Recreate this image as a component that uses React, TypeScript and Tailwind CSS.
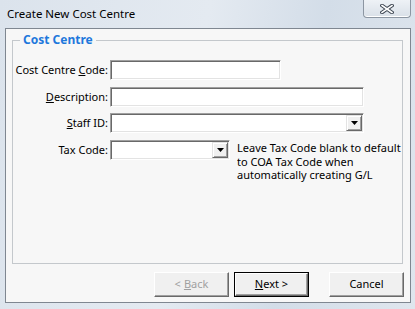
import React from "react";

const font = { fontFamily: '"Noto Sans", "Segoe UI", sans-serif' };

// sunken white field like a classic win32 edit box
const fieldCls =
  "h-[20px] bg-white border border-t-[#a0a0a0] border-l-[#a0a0a0] border-b-[#ffffff] border-r-[#ffffff] shadow-[inset_1px_1px_0_#696969,inset_-1px_-1px_0_#e3e3e3]";

const Mnemonic = ({ text, at }: { text: string; at: number }) => (
  <>
    {text.slice(0, at)}
    <span className="underline underline-offset-[1px]">{text[at]}</span>
    {text.slice(at + 1)}
  </>
);

const DropArrow = () => (
  <div className="ml-auto mr-[1px] h-[16px] w-[16px] flex items-center justify-center bg-[#f0f0f0] border border-t-[#e3e3e3] border-l-[#e3e3e3] border-b-[#696969] border-r-[#696969] shadow-[inset_1px_1px_0_#ffffff,inset_-1px_-1px_0_#a0a0a0]">
    <svg width="7" height="4" viewBox="0 0 7 4">
      <path d="M0 0h7L3.5 4z" fill="#000" />
    </svg>
  </div>
);

const Row = ({ label, children, className = "" }: { label: React.ReactNode; children: React.ReactNode; className?: string }) => (
  <div className={"flex items-start " + className}>
    <div className="w-[97px] pr-[2px] text-right leading-[20px]">{label}</div>
    {children}
  </div>
);

const WinButton = ({ children, disabled, isDefault }: { children: React.ReactNode; disabled?: boolean; isDefault?: boolean }) => (
  <button
    className={
      "h-[25px] w-[75px] flex items-center justify-center text-[11px] bg-[#f0f0f0] " +
      (isDefault ? "border border-[#000] " : "") +
      (disabled ? "text-[#a0a0a0]" : "text-black")
    }
    style={font}
  >
    <span className="w-full h-full flex items-center justify-center border border-t-[#ffffff] border-l-[#ffffff] border-b-[#696969] border-r-[#696969] shadow-[inset_-1px_-1px_0_#a0a0a0,inset_1px_1px_0_#f0f0f0]">
      {children}
    </span>
  </button>
);

export default function App() {
  return (
    <div
      className="w-[415px] h-[309px] overflow-hidden bg-[linear-gradient(100deg,#dbe3ec_0%,#e4eaf1_45%,#d3dde8_70%,#dfe6ee_100%)] text-black"
      style={font}
    >
      {/* title bar */}
      <div className="h-[28px] flex items-start">
        <div className="pl-[7px] pt-[6px] text-[11.5px] leading-[16px]">Create New Cost Centre</div>
        <div className="ml-auto mr-[4px] h-[18px] w-[48px] rounded-b-[4px] border border-t-0 border-[#8c96a2] bg-[linear-gradient(#eef2f6,#d9e0e8)] flex items-center justify-center shadow-[inset_0_-1px_0_#ffffff]">
          <svg width="14" height="10" viewBox="0 0 14 10">
            <path d="M2 1.5L12 8.5M12 1.5L2 8.5" stroke="#3d4652" strokeWidth="3.6" strokeLinecap="square" />
            <path d="M2 1.5L12 8.5M12 1.5L2 8.5" stroke="#ffffff" strokeWidth="1.6" strokeLinecap="square" />
          </svg>
        </div>
      </div>

      {/* client area */}
      <div className="ml-[5px] w-[406px] h-[275px] border border-[#7f8791] bg-[#f7f7f7] flex flex-col">
        <fieldset className="ml-[6px] mt-[4px] w-[391px] h-[231px] border border-[#c4c8cc] px-0 pb-0">
          <legend className="ml-[7px] px-[3px] text-[12px] font-bold leading-[14px] text-[#1e78dc]">Cost Centre</legend>
          <div className="text-[11px] flex flex-col">
            <Row label={<>Cost Centre <Mnemonic text="Code:" at={0} /></>} className="mt-[13px]">
              <div className={fieldCls + " w-[171px]"} />
            </Row>
            <Row label={<Mnemonic text="Description:" at={0} />} className="mt-[7px]">
              <div className={fieldCls + " w-[254px] h-[19px]"} />
            </Row>
            <Row label={<Mnemonic text="Staff ID:" at={0} />} className="mt-[6px]">
              <div className={fieldCls + " w-[254px] flex items-center"}>
                <DropArrow />
              </div>
            </Row>
            <Row label="Tax Code:" className="mt-[7px]">
              <div className={fieldCls + " w-[120px] h-[19px] flex items-center"}>
                <DropArrow />
              </div>
              <p className="ml-[7px] mt-[1px] w-[165px] h-[43px] overflow-hidden leading-[13.5px]">
                Leave Tax Code blank to default to COA Tax Code when automatically creating G/L codes.
              </p>
            </Row>
          </div>
        </fieldset>

        <div className="mt-[8px] mr-[6px] flex justify-end">
          <WinButton disabled>
            &lt; <span className="ml-[3px]"><Mnemonic text="Back" at={0} /></span>
          </WinButton>
          <div className="ml-[5px]">
            <WinButton isDefault>
              <Mnemonic text="Next" at={0} />&nbsp;&gt;
            </WinButton>
          </div>
          <div className="ml-[20px]">
            <WinButton>Cancel</WinButton>
          </div>
        </div>
      </div>
    </div>
  );
}
